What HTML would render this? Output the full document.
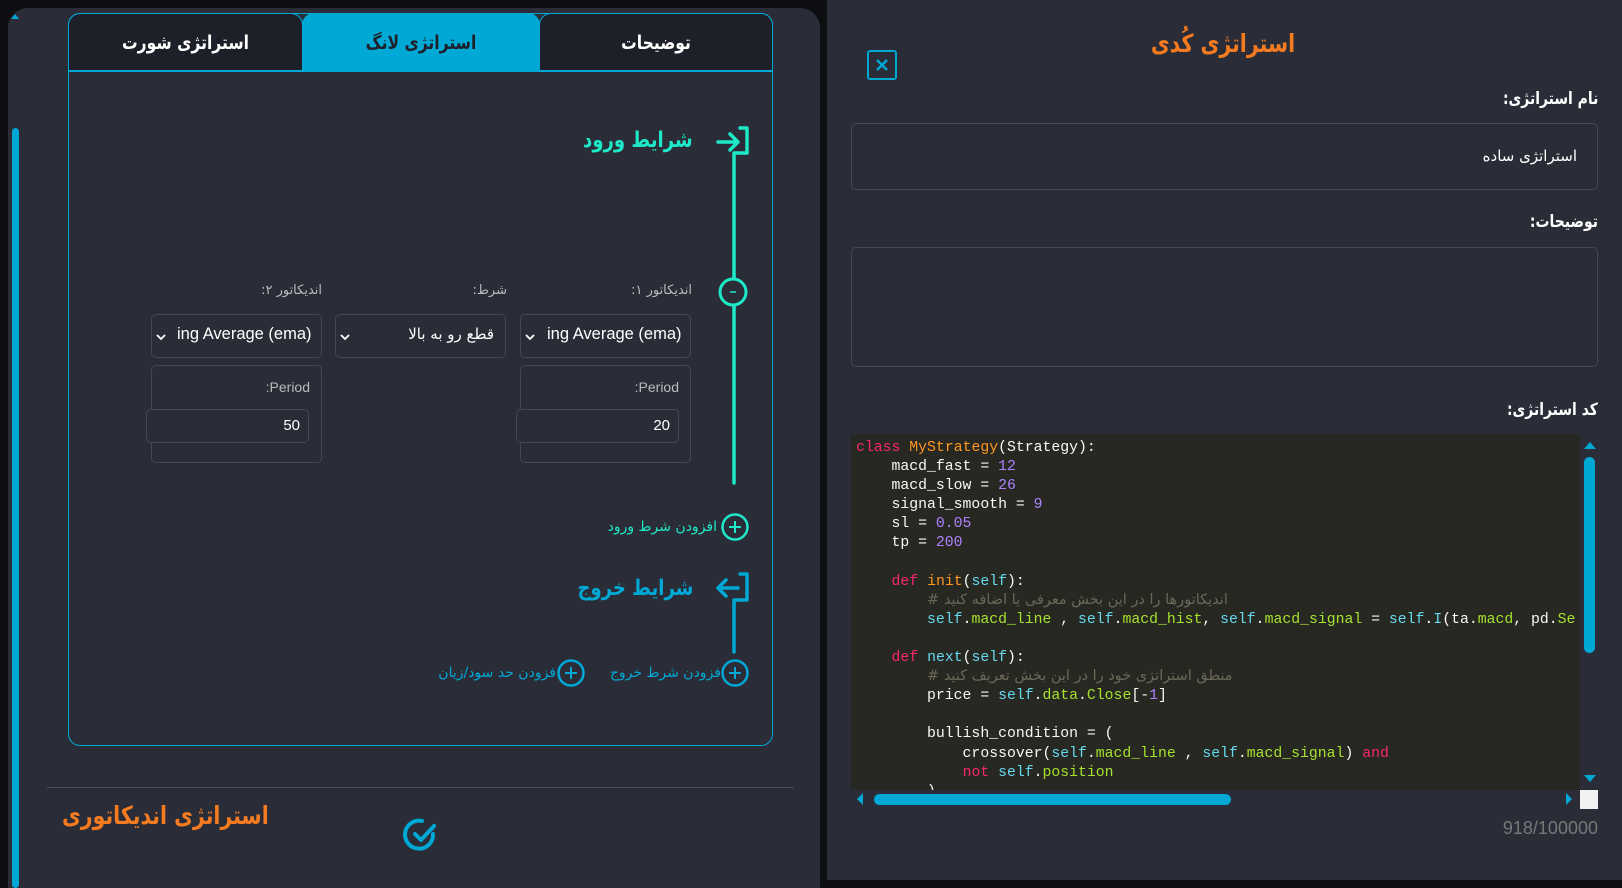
<!DOCTYPE html>
<html><head><meta charset="utf-8"><style>
*{margin:0;padding:0;box-sizing:border-box}
body{width:1622px;height:880px;background:#0c0e12;position:relative;overflow:hidden;font-family:"DejaVu Sans","Liberation Sans",sans-serif;color:#fff}
.a{position:absolute}
.fa{direction:rtl;white-space:nowrap;font-family:"DejaVu Sans","Liberation Sans",sans-serif}
.sr{transform:scaleX(.82);transform-origin:right center}
.sl{transform:scaleX(.82);transform-origin:left center}
.sc{transform:scaleX(.82);transform-origin:center center}
.box{position:absolute;border:1px solid #444755;border-radius:5px}
.code{position:absolute;left:856px;top:439px;font-family:"Liberation Mono",monospace;font-size:14.8px;line-height:19.1px;color:#f8f8f2;white-space:pre}
.k{color:#f92672}.c{color:#fd971f}.n{color:#ae81ff}.s{color:#66d9ef}.g{color:#a6e22e}.cm{color:#6b6858;font-family:"DejaVu Sans",sans-serif;font-size:14.5px;line-height:10px}
</style></head><body>
<!-- left card -->
<div class="a" style="left:8px;top:8px;width:812px;height:880px;background:#2a2d37;border-radius:20px 20px 0 0"></div>
<div class="a" style="left:12px;top:128px;width:7px;height:760px;background:#00a8d6;border-radius:4px"></div>
<div class="a" style="left:11px;top:14px;width:0;height:0;border-left:4px solid transparent;border-right:4px solid transparent;border-bottom:5px solid #00a8d6"></div>
<!-- tabs -->
<div class="a" style="left:68px;top:13px;width:705px;height:733px;border:1px solid #00a8d6;border-radius:12px"></div>
<div class="a" style="left:68px;top:13px;width:235px;height:58px;background:#1e2029;border:1px solid #00a8d6;border-bottom:none;border-radius:12px 12px 0 0"></div>
<div class="a" style="left:302px;top:13px;width:238px;height:58px;background:#00a8d6;border-radius:12px 12px 0 0"></div>
<div class="a" style="left:539px;top:13px;width:234px;height:58px;background:#1e2029;border:1px solid #00a8d6;border-bottom:none;border-radius:12px 12px 0 0"></div>
<div class="a" style="left:68px;top:70px;width:705px;height:2px;background:#00a8d6"></div>
<div class="a fa sc" style="left:68px;top:32px;width:235px;text-align:center;font-size:19px;font-weight:bold">استراتژی شورت</div>
<div class="a fa sc" style="left:302px;top:32px;width:238px;text-align:center;font-size:19px;font-weight:bold;color:#1e2029">استراتژی لانگ</div>
<div class="a fa sc" style="left:539px;top:32px;width:234px;text-align:center;font-size:19px;font-weight:bold">توضیحات</div>
<!-- entry -->
<div class="a fa sr" style="right:929px;top:128px;font-size:22px;font-weight:bold;color:#1de9c8">شرایط ورود</div>
<svg class="a" style="left:712px;top:122px" width="44" height="370" viewBox="0 0 44 370">
<g fill="none" stroke="#1de9c8" stroke-width="3.5" stroke-linecap="round" stroke-linejoin="round">
<path d="M28 6h7v25h-13v330"/><path d="M6 20h20M18 12l8 8-8 8"/></g></svg>
<svg class="a" style="left:717px;top:276px" width="32" height="32"><circle cx="16" cy="16" r="13" fill="#2a2d37" stroke="#1de9c8" stroke-width="3"/><path d="M13 16h6" stroke="#1de9c8" stroke-width="1.5"/></svg>
<div class="a fa" style="right:930px;top:283px;font-size:13px;color:#bbb">اندیکاتور ۱:</div>
<div class="a fa" style="right:1115px;top:283px;font-size:13px;color:#bbb">شرط:</div>
<div class="a fa" style="right:1300px;top:283px;font-size:13px;color:#bbb">اندیکاتور ۲:</div>
<div class="box" style="left:520px;top:314px;width:171px;height:44px"></div>
<div class="box" style="left:335px;top:314px;width:171px;height:44px"></div>
<div class="box" style="left:151px;top:314px;width:171px;height:44px"></div>
<div class="a" style="left:547px;top:325px;font-family:'Liberation Sans',sans-serif;font-size:16.5px">ing Average (ema)</div>
<div class="a" style="left:177px;top:325px;font-family:'Liberation Sans',sans-serif;font-size:16.5px">ing Average (ema)</div>
<div class="a fa" style="right:1128px;top:325px;font-size:15px">قطع رو به بالا</div>
<svg class="a" style="left:524px;top:331px" width="12" height="12"><path d="M2 4l4 4 4-4" fill="none" stroke="#fff" stroke-width="1.8"/></svg>
<svg class="a" style="left:339px;top:331px" width="12" height="12"><path d="M2 4l4 4 4-4" fill="none" stroke="#fff" stroke-width="1.8"/></svg>
<svg class="a" style="left:155px;top:331px" width="12" height="12"><path d="M2 4l4 4 4-4" fill="none" stroke="#fff" stroke-width="1.8"/></svg>
<div class="box" style="left:520px;top:365px;width:171px;height:98px"></div>
<div class="box" style="left:151px;top:365px;width:171px;height:98px"></div>
<div class="a" style="left:520px;top:379px;width:159px;text-align:right;font-family:'Liberation Sans',sans-serif;font-size:14px;color:#bbb">:Period</div>
<div class="a" style="left:151px;top:379px;width:159px;text-align:right;font-family:'Liberation Sans',sans-serif;font-size:14px;color:#bbb">:Period</div>
<div class="box" style="left:516px;top:409px;width:163px;height:34px;background:#2a2d37"></div>
<div class="box" style="left:146px;top:409px;width:163px;height:34px;background:#2a2d37"></div>
<div class="a" style="left:516px;top:417px;width:154px;text-align:right;font-family:'Liberation Sans',sans-serif;font-size:15px">20</div>
<div class="a" style="left:146px;top:417px;width:154px;text-align:right;font-family:'Liberation Sans',sans-serif;font-size:15px">50</div>
<svg class="a" style="left:720px;top:512px" width="30" height="30"><circle cx="15" cy="15" r="12.5" fill="none" stroke="#1de9c8" stroke-width="2.5"/><path d="M15 9v12M9 15h12" stroke="#1de9c8" stroke-width="2"/></svg>
<div class="a fa" style="right:905px;top:519px;font-size:14px;color:#1de9c8">افزودن شرط ورود</div>
<!-- exit -->
<div class="a fa sr" style="right:929px;top:576px;font-size:22px;font-weight:bold;color:#00a8d6">شرایط خروج</div>
<svg class="a" style="left:712px;top:568px" width="44" height="90" viewBox="0 0 44 90">
<g fill="none" stroke="#00a8d6" stroke-width="3.5" stroke-linecap="round" stroke-linejoin="round">
<path d="M28 6h7v26h-13v52"/><path d="M26 20H6M14 12l-8 8 8 8"/></g></svg>
<svg class="a" style="left:720px;top:658px" width="30" height="30"><circle cx="15" cy="15" r="12.5" fill="none" stroke="#00a8d6" stroke-width="2.5"/><path d="M15 9v12M9 15h12" stroke="#00a8d6" stroke-width="2"/></svg>
<svg class="a" style="left:556px;top:658px" width="30" height="30"><circle cx="15" cy="15" r="12.5" fill="none" stroke="#00a8d6" stroke-width="2.5"/><path d="M15 9v12M9 15h12" stroke="#00a8d6" stroke-width="2"/></svg>
<div class="a fa" style="right:901px;top:665px;font-size:14px;color:#00a8d6">فزودن شرط خروج</div>
<div class="a fa" style="right:1066px;top:665px;font-size:14px;color:#00a8d6">فزودن حد سود/زیان</div>
<div class="a" style="left:47px;top:787px;width:747px;height:1px;background:#4a4d58"></div>
<div class="a fa sl" style="left:62px;top:801px;font-size:25px;font-weight:bold;color:#f47b20">استراتژی اندیکاتوری</div>
<svg class="a" style="left:402px;top:815px" width="40" height="40" viewBox="0 0 40 40"><path d="M31 19A14 14 0 1 1 20 6" fill="none" stroke="#00a8d6" stroke-width="4" stroke-linecap="round"/><path d="M13 19l6 6 13-14" fill="none" stroke="#00a8d6" stroke-width="4" stroke-linecap="round" stroke-linejoin="round"/></svg>
<!-- right panel -->
<div class="a" style="left:827px;top:0;width:795px;height:880px;background:#2a2d37"></div>
<div class="a fa sc" style="left:1123px;top:29px;width:200px;text-align:center;font-size:25px;font-weight:bold;color:#f47b20">استراتژی کُدی</div>
<div class="a" style="left:867px;top:50px;width:30px;height:30px;border:2.5px solid #00a8d6;border-radius:3px"></div>
<svg class="a" style="left:867px;top:50px" width="30" height="30"><path d="M10 10l10 10M20 10l-10 10" stroke="#00a8d6" stroke-width="2.5"/></svg>
<div class="a fa sr" style="right:24px;top:89px;font-size:17px;font-weight:bold">نام استراتژی:</div>
<div class="box" style="left:851px;top:123px;width:747px;height:67px"></div>
<div class="a fa" style="right:45px;top:147px;font-size:15px">استراتژی ساده</div>
<div class="a fa sr" style="right:24px;top:212px;font-size:17px;font-weight:bold">توضیحات:</div>
<div class="box" style="left:851px;top:247px;width:747px;height:120px"></div>
<div class="a fa sr" style="right:24px;top:400px;font-size:17px;font-weight:bold">کد استراتژی:</div>
<div class="a" style="left:851px;top:434px;width:729px;height:356px;background:#272822;overflow:hidden">
<div class="code" style="left:5px;top:5px"><span class="k">class</span> <span class="c">MyStrategy</span>(Strategy):
    macd_fast = <span class="n">12</span>
    macd_slow = <span class="n">26</span>
    signal_smooth = <span class="n">9</span>
    sl = <span class="n">0.05</span>
    tp = <span class="n">200</span>

    <span class="k">def</span> <span class="c">init</span>(<span class="s">self</span>):
        <span class="cm"># اندیکاتورها را در این بخش معرفی یا اضافه کنید</span>
        <span class="s">self</span>.<span class="g">macd_line</span> , <span class="s">self</span>.<span class="g">macd_hist</span>, <span class="s">self</span>.<span class="g">macd_signal</span> = <span class="s">self</span>.<span class="s">I</span>(ta.<span class="g">macd</span>, pd.<span class="g">Se</span>

    <span class="k">def</span> <span class="s">next</span>(<span class="s">self</span>):
        <span class="cm"># منطق استراتژی خود را در این بخش تعریف کنید</span>
        price = <span class="s">self</span>.<span class="g">data</span>.<span class="g">Close</span>[-<span class="n">1</span>]

        bullish_condition = (
            crossover(<span class="s">self</span>.<span class="g">macd_line</span> , <span class="s">self</span>.<span class="g">macd_signal</span>) <span class="k">and</span>
            <span class="k">not</span> <span class="s">self</span>.<span class="g">position</span>
        )</div></div>
<div class="a" style="left:1584px;top:442px;width:0;height:0;border-left:6px solid transparent;border-right:6px solid transparent;border-bottom:7px solid #00a8d6"></div>
<div class="a" style="left:1584px;top:457px;width:11px;height:196px;background:#00a8d6;border-radius:6px"></div>
<div class="a" style="left:1584px;top:775px;width:0;height:0;border-left:6px solid transparent;border-right:6px solid transparent;border-top:7px solid #00a8d6"></div>
<div class="a" style="left:857px;top:793px;width:0;height:0;border-top:6px solid transparent;border-bottom:6px solid transparent;border-right:6px solid #00a8d6"></div>
<div class="a" style="left:874px;top:794px;width:357px;height:11px;background:#00a8d6;border-radius:6px"></div>
<div class="a" style="left:1566px;top:793px;width:0;height:0;border-top:6px solid transparent;border-bottom:6px solid transparent;border-left:6px solid #00a8d6"></div>
<div class="a" style="left:1580px;top:790px;width:18px;height:19px;background:#f2f2f2"></div>
<div class="a" style="right:24px;top:818px;font-family:'Liberation Sans',sans-serif;font-size:18px;color:#777">918/100000</div>
</body></html>
